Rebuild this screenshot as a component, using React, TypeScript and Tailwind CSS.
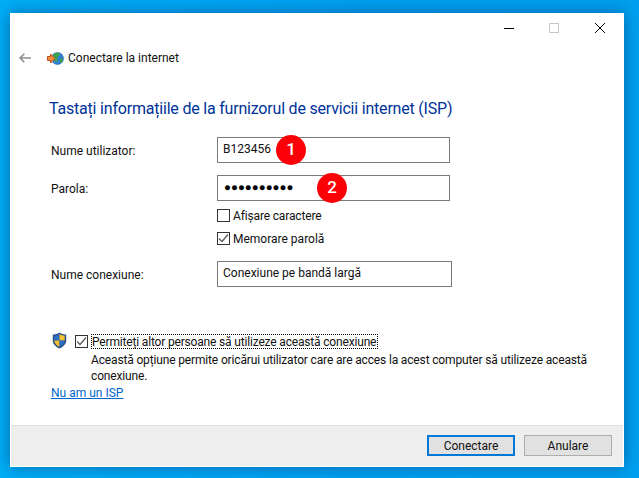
const font = { fontFamily: 'Roboto, "Noto Sans", sans-serif' };

function Badge({ n, className }: { n: string; className: string }) {
  return (
    <span
      className={`absolute top-[-3px] flex h-[30px] w-[30px] items-center justify-center rounded-full bg-[#fb0007] text-[17px] font-medium text-white ${className}`}
    >
      {n}
    </span>
  );
}

function Box({ checked }: { checked?: boolean }) {
  return (
    <span className="flex h-[13px] w-[13px] shrink-0 items-center justify-center border border-[#333333] bg-white">
      {checked && (
        <svg width="11" height="11" viewBox="0 0 11 11">
          <path d="M1 5.5 4 8.5 10 1.5" fill="none" stroke="#5a5a5a" strokeWidth="1.3" />
        </svg>
      )}
    </span>
  );
}

function Globe() {
  return (
    <svg width="17" height="15" viewBox="0 0 17 15" className="shrink-0">
      <circle cx="10.5" cy="7.5" r="6" fill="#2f7fd6" stroke="#1f5fa8" strokeWidth="0.6" />
      <path d="M7.5 2.5 11 1.6 13 4 10 6.5 11 10 8 11 6.5 8 6 4.5Z" fill="#3fa34a" />
      <path d="M13 8 16 7 15 11 13 12Z" fill="#3fa34a" />
      <path d="M0.5 5.5H3.5V3L8 7.5 3.5 12V9.5H0.5Z" fill="#f08a3c" stroke="#c2501c" strokeWidth="1" />
    </svg>
  );
}

function Shield() {
  return (
    <svg width="15" height="17" viewBox="0 0 15 17" className="shrink-0">
      <path d="M7.5 0.5C5.5 2 3 2.6 0.8 2.6V8.5C0.8 12.3 4 15 7.5 16.5 11 15 14.2 12.3 14.2 8.5V2.6C12 2.6 9.5 2 7.5 0.5Z" fill="#2c4f86" />
      <path d="M7.5 2C6 3 4.2 3.5 2.3 3.7V8.5H7.5Z" fill="#2a6fc4" />
      <path d="M7.5 2C9 3 10.8 3.5 12.7 3.7V8.5H7.5Z" fill="#f6c12d" />
      <path d="M2.3 8.5H7.5V15C5 13.8 2.6 11.6 2.3 8.5Z" fill="#f6c12d" />
      <path d="M12.7 8.5H7.5V15C10 13.8 12.4 11.6 12.7 8.5Z" fill="#2a6fc4" />
    </svg>
  );
}

export default function App() {
  return (
    <div
      className="h-[478px] w-[639px] overflow-hidden bg-[linear-gradient(90deg,#00adf5,#009ff0_60%,#00a0ee)] pl-[10px] pt-[13px] text-[12px] text-[#111111]"
      style={font}
    >
      <div className="flex h-[454px] w-[614px] flex-col bg-white shadow-[0_0_14px_rgba(0,50,110,0.55)]">
        {/* barra de titlu */}
        <div className="flex h-[31px] items-start justify-end pr-[19px] pt-[10px]">
          <svg width="10" height="10" viewBox="0 0 10 10" className="mr-[35px]">
            <path d="M0 5.5H10" stroke="#000" strokeWidth="1" />
          </svg>
          <svg width="10" height="10" viewBox="0 0 10 10" className="mr-[36px]">
            <rect x="0.5" y="0.5" width="9" height="9" fill="none" stroke="#c8c8c8" />
          </svg>
          <svg width="10" height="10" viewBox="0 0 10 10">
            <path d="M0 0 10 10M10 0 0 10" stroke="#000" strokeWidth="1" />
          </svg>
        </div>

        <div className="flex h-[28px] items-center pl-[9px]">
          <svg width="12" height="10" viewBox="0 0 12 10" className="mr-[16px] shrink-0">
            <path d="M12 5H1.2M5.3 0.8 1.1 5 5.3 9.2" fill="none" stroke="#8c8c8c" strokeWidth="1.6" />
          </svg>
          <Globe />
          <span className="ml-[4px] text-[12px] leading-none">Conectare la internet</span>
        </div>

        <div className="flex flex-1 flex-col pl-[39px]">
          <h1 className="mt-[25px] h-[24px] text-[16px] font-normal leading-[24px] tracking-[-0.2px] text-[#003399]">
            Tastați informațiile de la furnizorul de servicii internet (ISP)
          </h1>

          <div className="mt-[16px] flex h-[26px] items-center pl-[2px]">
            <span className="w-[166px] pt-[2px]">Nume utilizator:</span>
            <div className="relative flex h-[26px] w-[233px] items-center border border-[#7a7a7a] pb-[3px] pl-[5px]">
              B123456
              <Badge n="1" className="left-[58px]" />
            </div>
          </div>

          <div className="mt-[12px] flex h-[26px] items-center pl-[2px]">
            <span className="w-[166px] pt-[2px]">Parola:</span>
            <div className="relative flex h-[26px] w-[233px] items-center border border-[#7a7a7a] pl-[6px] font-['Liberation_Sans'] text-[11.5px] text-black">
              ●●●●●●●●●●
              <Badge n="2" className="left-[99px] font-['Roboto']" />
            </div>
          </div>

          <div className="ml-[168px] mt-[8px] flex h-[13px] items-center gap-[3px]">
            <Box />
            <span className="tracking-[-0.15px]">Afișare caractere</span>
          </div>
          <div className="ml-[168px] mt-[10px] flex h-[13px] items-center gap-[3px]">
            <Box checked />
            <span>Memorare parolă</span>
          </div>

          <div className="mt-[16px] flex h-[26px] items-center pl-[2px]">
            <span className="w-[166px] pt-[2px]">Nume conexiune:</span>
            <div className="flex h-[26px] w-[235px] items-center border border-[#7a7a7a] pb-[3px] pl-[5px]">
              Conexiune pe bandă largă
            </div>
          </div>

          <div className="mt-[45px] flex items-start pl-[3px]">
            <Shield />
            <div className="ml-[8px] mt-[3px]">
              <Box checked />
            </div>
            <div className="ml-[3px] mt-[2px] flex flex-col">
              <span className="flex h-[15px] w-[287px] items-center whitespace-nowrap border border-dotted border-black leading-none tracking-[-0.17px]">
                Permiteți altor persoane să utilizeze această conexiune
              </span>
              <p className="mt-[3px] w-[510px] leading-[16px] tracking-[-0.15px]">
                Această opțiune permite oricărui utilizator care are acces la acest computer să utilizeze această conexiune.
              </p>
            </div>
          </div>
          <a className="ml-[2px] mt-[1px] w-fit leading-[16px] text-[#0066cc] underline">Nu am un ISP</a>
        </div>

        {/* butoane */}
        <div className="mx-px mb-px flex h-[41px] items-start justify-end gap-[9px] border-t border-[#dfdfdf] bg-[#eeeeee] pr-[11px] pt-[9px]">
          <button className="h-[21px] w-[88px] border-2 border-[#0078d7] bg-[#e1e1e1] text-[12px] leading-none">Conectare</button>
          <button className="h-[21px] w-[88px] border border-[#adadad] bg-[#e1e1e1] text-[12px] leading-none">Anulare</button>
        </div>
      </div>
    </div>
  );
}
